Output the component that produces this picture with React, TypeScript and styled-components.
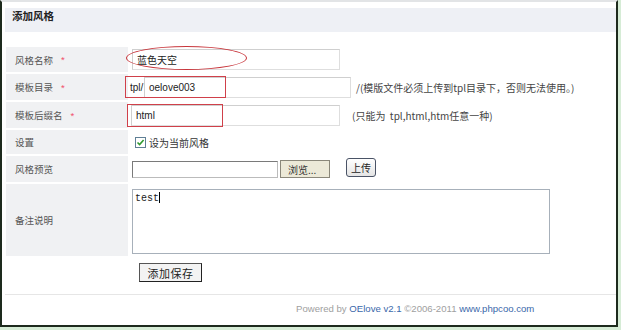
import React from "react";
import styled, { createGlobalStyle } from "styled-components";

const GlobalStyle = createGlobalStyle`
  body {
    margin: 0;
    background: #d6ecd6;
    font-family: "Liberation Sans", "Noto Sans CJK SC", sans-serif;
  }
`;

const Frame = styled.div`
  box-sizing: border-box;
  width: 618px;
  height: 327px;
  background: #fff;
  border-top: 2px solid #e2e4e6;
  border-left: 2px solid #1d2a1d;
  border-right: 2px solid #1d2a1d;
  border-bottom: 2px solid #1d2a1d;
  padding: 6px 0 0 3px;
  display: flex;
  flex-direction: column;
`;

const Header = styled.div`
  height: 24px;
  line-height: 24px;
  background: #eef0f5;
  padding-left: 7px;
  font: bold 10.5px "Noto Sans CJK SC", sans-serif;
  color: #222;
`;

const Form = styled.div`
  margin: 15px 0 0 1px;
  display: flex;
  flex-direction: column;
  gap: 2px;
`;

const Row = styled.div<{ $h: number }>`
  display: grid;
  grid-template-columns: 122px 1fr;
  column-gap: 2px;
  height: ${(p) => p.$h}px;
`;

const Label = styled.div<{ $blank?: boolean }>`
  background: ${(p) => (p.$blank ? "transparent" : "#f0f1f3")};
  display: flex;
  align-items: center;
  padding-left: 9px;
  font: 9.5px "Noto Sans CJK SC", sans-serif;
  color: #555;
`;

const Star = styled.span`
  color: #f0506a;
  margin-left: 8px;
  font-family: "Liberation Sans", sans-serif;
`;

const Value = styled.div<{ $top?: boolean; $pad?: number }>`
  position: relative;
  display: flex;
  align-items: ${(p) => (p.$top ? "flex-start" : "center")};
  padding-left: ${(p) => p.$pad ?? 2}px;
  padding-top: ${(p) => (p.$top ? 4 : 0)}px;
  font: 9.5px "Liberation Sans", "Noto Sans CJK SC", sans-serif;
  color: #444;
`;

const TextInput = styled.div<{ $w: number }>`
  box-sizing: border-box;
  width: ${(p) => p.$w}px;
  height: 21px;
  border: 1px solid #dedede;
  border-top-color: #cfcfcf;
  border-left-color: #cfcfcf;
  padding-left: 4px;
  display: flex;
  align-items: center;
  font: 10px "Liberation Sans", "Noto Sans CJK SC", sans-serif;
  color: #222;
  background: #fff;
`;

const Prefix = styled.span`
  font: 10px "Liberation Sans", sans-serif;
  color: #222;
  width: 14px;
  margin-left: -1px;
`;

const Hint = styled.span<{ $gap: number }>`
  margin-left: ${(p) => p.$gap}px;
  font: 10px "Noto Sans CJK SC", sans-serif;
  color: #444;
  white-space: nowrap;
`;

const Ellipse = styled.span`
  position: absolute;
  left: -4px;
  top: -1px;
  width: 121px;
  height: 24px;
  border: 1.5px solid #c8363c;
  border-radius: 50%;
  box-sizing: border-box;
  pointer-events: none;
`;

const Mark = styled.span<{ $l: number; $t: number; $w: number; $h: number }>`
  position: absolute;
  left: ${(p) => p.$l}px;
  top: ${(p) => p.$t}px;
  width: ${(p) => p.$w}px;
  height: ${(p) => p.$h}px;
  border: 1.5px solid #d0404a;
  box-sizing: border-box;
  pointer-events: none;
`;

const CheckBox = styled.span`
  box-sizing: border-box;
  width: 11px;
  height: 11px;
  margin-left: 3px;
  border: 1px solid #5f7f95;
  background: #fff;
  display: flex;
  align-items: center;
  justify-content: center;
`;

const CheckText = styled.span`
  margin-left: 3px;
  font: 10px "Noto Sans CJK SC", sans-serif;
  color: #333;
`;

const FileBox = styled.div`
  box-sizing: border-box;
  width: 146px;
  height: 17px;
  border: 1px solid #7a7a7a;
  border-right-color: #bbb;
  border-bottom-color: #bbb;
  background: #fff;
`;

const BrowseButton = styled.div`
  box-sizing: border-box;
  width: 50px;
  height: 18px;
  margin-left: 2px;
  background: #ece9d8;
  border: 1px solid #8a877a;
  display: flex;
  align-items: center;
  padding-left: 7px;
  font: 10px "Noto Sans CJK SC", sans-serif;
  color: #333;
`;

const UploadButton = styled.div`
  box-sizing: border-box;
  width: 30px;
  height: 19px;
  margin-left: 16px;
  margin-top: -4px;
  border: 1px solid #4a5366;
  border-radius: 3px;
  background: linear-gradient(#ffffff, #e4e4e4);
  display: flex;
  align-items: center;
  justify-content: center;
  font: 10px "Noto Sans CJK SC", sans-serif;
  color: #222;
`;

const TextArea = styled.div`
  box-sizing: border-box;
  width: 418px;
  height: 65px;
  margin-top: 1px;
  border: 1px solid #a7b0ba;
  padding: 2px 2px;
  font: 10px/12px "Liberation Mono", monospace;
  color: #222;
  background: #fff;
`;

const Caret = styled.span`
  display: inline-block;
  width: 1px;
  height: 11px;
  background: #000;
  vertical-align: -2px;
`;

const SaveButton = styled.div`
  box-sizing: border-box;
  width: 63px;
  height: 19px;
  margin-top: 1px;
  border: 1px solid #555;
  border-right-color: #222;
  border-bottom-color: #222;
  background: #f3f3f3;
  display: flex;
  align-items: center;
  justify-content: center;
  font: 11px "Noto Sans CJK SC", sans-serif;
  color: #222;
  letter-spacing: 0.5px;
`;

const Footer = styled.div`
  margin-top: 11px;
  border-top: 1px solid #e6e6e6;
  height: 27px;
  display: flex;
  align-items: center;
  padding-left: 291px;
  font: 9.6px "Liberation Sans", sans-serif;
  color: #a0a0a0;
  white-space: pre;
`;

const Link = styled.span`
  color: #3a68aa;
`;

export default function App() {
  return (
    <>
      <GlobalStyle />
      <Frame>
        <Header>添加风格</Header>
        <Form>
          <Row $h={25}>
            <Label>
              风格名称<Star>*</Star>
            </Label>
            <Value>
              <TextInput $w={208}>蓝色天空</TextInput>
              <Ellipse />
            </Value>
          </Row>
          <Row $h={26}>
            <Label>
              模板目录<Star>*</Star>
            </Label>
            <Value $pad={1}>
              <Prefix>tpl/</Prefix>
              <TextInput $w={207}>oelove003</TextInput>
              <Hint $gap={5}>/(模版文件必须上传到tpl目录下，否则无法使用。)</Hint>
              <Mark $l={-5} $t={2} $w={101} $h={22} />
            </Value>
          </Row>
          <Row $h={26}>
            <Label>
              模板后缀名<Star>*</Star>
            </Label>
            <Value $pad={1}>
              <TextInput $w={209}>html</TextInput>
              <Hint $gap={12}>(只能为&nbsp; tpl,html,htm任意一种)</Hint>
              <Mark $l={-3} $t={2} $w={96} $h={23} />
            </Value>
          </Row>
          <Row $h={24}>
            <Label>设置</Label>
            <Value>
              <CheckBox>
                <svg width="9" height="9" viewBox="0 0 9 9">
                  <path d="M1.5 4.5 L3.6 6.6 L7.6 2" fill="none" stroke="#2f9a2f" strokeWidth="1.6" />
                </svg>
              </CheckBox>
              <CheckText>设为当前风格</CheckText>
            </Value>
          </Row>
          <Row $h={26}>
            <Label>风格预览</Label>
            <Value>
              <FileBox />
              <BrowseButton>浏览...</BrowseButton>
              <UploadButton>上传</UploadButton>
            </Value>
          </Row>
          <Row $h={72}>
            <Label>备注说明</Label>
            <Value $top>
              <TextArea>
                test<Caret />
              </TextArea>
            </Value>
          </Row>
          <Row $h={25}>
            <Label $blank />
            <Value $top $pad={9}>
              <SaveButton>添加保存</SaveButton>
            </Value>
          </Row>
        </Form>
        <Footer>
          Powered by <Link>OElove v2.1</Link> ©2006-2011 <Link>www.phpcoo.com</Link>
        </Footer>
      </Frame>
    </>
  );
}
